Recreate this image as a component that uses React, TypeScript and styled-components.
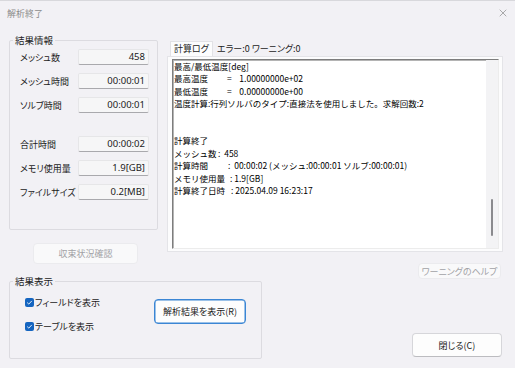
import React from 'react';
import styled, { createGlobalStyle } from 'styled-components';
import { X } from 'lucide-react';

const JP = `"Noto Sans CJK JP", "Noto Sans", sans-serif`;

const GlobalStyle = createGlobalStyle`
  html, body {
    margin: 0;
    padding: 0;
    background: #f2f1f5;
  }
  body {
    font-family: ${JP};
    font-size: 9px;
    color: #1b1b1b;
  }
`;

const Window = styled.div`
  width: 515px;
  height: 368px;
  box-sizing: border-box;
  background: #f2f1f5;
  border-top: 1px solid #d8d8dc;
  display: flex;
  flex-direction: column;
  overflow: hidden;
`;

const TitleBar = styled.div`
  height: 24px;
  display: flex;
  align-items: center;
  justify-content: space-between;
  padding: 0 6px 0 7px;
  color: #8c8c8c;
  font-size: 9px;
  font-feature-settings: 'palt';
`;

const Body = styled.div`
  display: flex;
  flex-direction: column;
  padding: 9px 12px 0 9px;
`;

const TopRow = styled.div`
  display: flex;
  align-items: flex-start;
`;

const LeftCol = styled.div`
  width: 149px;
  display: flex;
  flex-direction: column;
`;

const RightCol = styled.div`
  margin-left: 9px;
  width: 336px;
  display: flex;
  flex-direction: column;
  padding-top: 7px;
`;

const Group = styled.fieldset<{ $w: number; $h: number }>`
  margin: 0;
  padding: 0;
  width: ${(p) => p.$w}px;
  height: ${(p) => p.$h}px;
  box-sizing: border-box;
  border: 1px solid #dcdbe0;
  border-radius: 2px;
  min-width: 0;
`;

const Legend = styled.legend`
  margin-left: 3px;
  padding: 0 2px;
  font-size: 9.5px;
  line-height: 12px;
  color: #1b1b1b;
  font-feature-settings: 'palt';
`;

const InfoBody = styled.div`
  display: flex;
  flex-direction: column;
  gap: 8px;
  padding: 3px 8px 0 10px;
`;

const InfoRow = styled.div<{ $gapTop?: boolean }>`
  display: flex;
  align-items: center;
  height: 16px;
  margin-top: ${(p) => (p.$gapTop ? 15 : 0)}px;
`;

const InfoLabel = styled.span`
  width: 58px;
  font-size: 9px;
  font-feature-settings: 'palt';
`;

const ValueBox = styled.div`
  width: 71px;
  height: 16px;
  box-sizing: border-box;
  background: #f6f6f7;
  border: 1px solid #e6e6e8;
  border-bottom-color: #a9a9ad;
  border-radius: 2px;
  font-family: "Noto Sans", "Noto Sans CJK JP", sans-serif;
  font-size: 9.5px;
  line-height: 14px;
  text-align: right;
  padding-right: 3px;
  color: #1b1b1b;
`;

const FlatButton = styled.button<{ $w: number; $h: number; $disabled?: boolean; $focus?: boolean }>`
  width: ${(p) => p.$w}px;
  height: ${(p) => p.$h}px;
  box-sizing: border-box;
  font-family: ${JP};
  font-size: 9px;
  font-feature-settings: 'palt';
  padding: 0;
  background: ${(p) => (p.$disabled ? '#f9f9fa' : '#fdfdfd')};
  color: ${(p) => (p.$disabled ? '#a2a2a6' : '#1b1b1b')};
  border: 1px solid ${(p) => (p.$focus ? '#3b86d4' : p.$disabled ? '#ebebee' : '#d6d6da')};
  border-bottom-color: ${(p) => (p.$focus ? '#3b86d4' : p.$disabled ? '#ebebee' : '#bcbcc0')};
  box-shadow: ${(p) => (p.$focus ? 'inset 0 0 0 0.5px #3b86d4' : 'none')};
  border-radius: 4px;
`;

const ConvergeWrap = styled.div`
  margin-top: 13px;
  padding-left: 24px;
`;

const TabStrip = styled.div`
  display: flex;
  align-items: flex-end;
  height: 15px;
  padding-left: 3px;
`;

const Tab = styled.div<{ $active?: boolean }>`
  height: 15px;
  line-height: 14px;
  padding: 0 3px;
  font-size: 9px;
  font-feature-settings: 'palt';
  background: ${(p) => (p.$active ? '#fcfcfd' : 'transparent')};
  border: 1px solid ${(p) => (p.$active ? '#e2e2e6' : 'transparent')};
  border-bottom: none;
  box-sizing: border-box;
`;

const TabPanel = styled.div`
  height: 196px;
  box-sizing: border-box;
  background: #fcfcfd;
  border: 1px solid #e4e4e8;
  padding: 2px 3px 2px 4px;
`;

const LogArea = styled.div`
  height: 100%;
  box-sizing: border-box;
  display: flex;
  background: #ffffff;
  border-top: 1px solid #7d7d7d;
  border-left: 1px solid #7d7d7d;
  border-right: 1px solid #ececec;
  border-bottom: 1px solid #ececec;
  box-shadow: inset 1px 1px 0 #b4b4b4;
`;

const LogText = styled.div`
  flex: 1;
  padding: 0 0 0 1px;
  font-size: 8.5px;
  line-height: 12.4px;
  color: #000;
  white-space: pre;
  overflow: hidden;
`;

const LogKey = styled.span<{ $w: number }>`
  display: inline-block;
  width: ${(p) => p.$w}px;
`;

const ScrollTrack = styled.div`
  width: 12px;
  background: #f3f3f5;
  display: flex;
  justify-content: center;
  padding-top: 139px;
  box-sizing: border-box;
`;

const ScrollThumb = styled.div`
  width: 2px;
  height: 37px;
  border-radius: 1px;
  background: #8a8a8e;
`;

const HelpRow = styled.div`
  display: flex;
  justify-content: flex-end;
  margin-top: 11px;
  padding-right: 2px;
`;

const BottomRow = styled.div`
  display: flex;
  align-items: flex-end;
  justify-content: space-between;
  margin-top: -4px;
`;

const ShowBody = styled.div`
  display: flex;
  align-items: flex-start;
  padding: 8px 0 0 15px;
`;

const CheckCol = styled.div`
  width: 129px;
  display: flex;
  flex-direction: column;
  gap: 10px;
`;

const CheckRow = styled.label`
  display: flex;
  align-items: center;
  height: 14px;
  font-size: 9px;
  font-feature-settings: 'palt';
`;

const CheckBox = styled.span`
  width: 9px;
  height: 9px;
  border-radius: 2px;
  background: #1565c0;
  display: flex;
  align-items: center;
  justify-content: center;
  margin-right: 1px;
`;

const ShowButtonWrap = styled.div`
  margin-top: 4px;
`;

const CloseWrap = styled.div`
  margin-right: 1px;
  margin-bottom: 2px;
`;

const Check = () => (
  <CheckBox>
    <svg width="7" height="7" viewBox="0 0 7 7">
      <path d="M1.2 3.6 L2.8 5.1 L5.8 1.9" fill="none" stroke="#fff" strokeWidth="0.9" />
    </svg>
  </CheckBox>
);

const infoRows = [
  { label: 'メッシュ数', value: '458' },
  { label: 'メッシュ時間', value: '00:00:01' },
  { label: 'ソルブ時間', value: '00:00:01' },
  { label: '合計時間', value: '00:00:02', gap: true },
  { label: 'メモリ使用量', value: '1.9[GB]' },
  { label: 'ファイルサイズ', value: '0.2[MB]' },
];

const App = () => {
  return (
    <Window>
      <GlobalStyle />
      <TitleBar>
        <span>解析終了</span>
        <X size={12} strokeWidth={1.1} color="#6a6a6a" />
      </TitleBar>
      <Body>
        <TopRow>
          <LeftCol>
            <Group $w={149} $h={196}>
              <Legend>結果情報</Legend>
              <InfoBody>
                {infoRows.map((r) => (
                  <InfoRow key={r.label} $gapTop={r.gap}>
                    <InfoLabel>{r.label}</InfoLabel>
                    <ValueBox>{r.value}</ValueBox>
                  </InfoRow>
                ))}
              </InfoBody>
            </Group>
            <ConvergeWrap>
              <FlatButton $w={105} $h={21} $disabled>
                収束状況確認
              </FlatButton>
            </ConvergeWrap>
          </LeftCol>
          <RightCol>
            <TabStrip>
              <Tab $active>計算ログ</Tab>
              <Tab>エラー:0 ワーニング:0</Tab>
            </TabStrip>
            <TabPanel>
              <LogArea>
                <LogText>
                  <div>最高/最低温度[deg]</div>
                  <div>
                    <LogKey $w={53}>最高温度</LogKey>{'=    1.00000000e+02'}
                  </div>
                  <div>
                    <LogKey $w={53}>最低温度</LogKey>{'=    0.00000000e+00'}
                  </div>
                  <div>温度計算:行列ソルバのタイプ:直接法を使用しました。求解回数:2</div>
                  <div> </div>
                  <div> </div>
                  <div>計算終了</div>
                  <div>
                    <LogKey $w={44}>メッシュ数</LogKey>{':  458'}
                  </div>
                  <div>
                    <LogKey $w={54}>計算時間</LogKey>
                    {':  00:00:02 (メッシュ:00:00:01 ソルブ:00:00:01)'}
                  </div>
                  <div>
                    <LogKey $w={56}>メモリ使用量</LogKey>{': 1.9[GB]'}
                  </div>
                  <div>
                    <LogKey $w={57}>計算終了日時</LogKey>{': 2025.04.09 16:23:17'}
                  </div>
                </LogText>
                <ScrollTrack>
                  <ScrollThumb />
                </ScrollTrack>
              </LogArea>
            </TabPanel>
            <HelpRow>
              <FlatButton $w={83} $h={16} $disabled>
                ワーニングのヘルプ
              </FlatButton>
            </HelpRow>
          </RightCol>
        </TopRow>
        <BottomRow>
          <Group $w={253} $h={84}>
            <Legend>結果表示</Legend>
            <ShowBody>
              <CheckCol>
                <CheckRow>
                  <Check />
                  フィールドを表示
                </CheckRow>
                <CheckRow>
                  <Check />
                  テーブルを表示
                </CheckRow>
              </CheckCol>
              <ShowButtonWrap>
                <FlatButton $w={92} $h={25} $focus>
                  解析結果を表示(R)
                </FlatButton>
              </ShowButtonWrap>
            </ShowBody>
          </Group>
          <CloseWrap>
            <FlatButton $w={90} $h={24}>
              閉じる(C)
            </FlatButton>
          </CloseWrap>
        </BottomRow>
      </Body>
    </Window>
  );
};

export default App;
